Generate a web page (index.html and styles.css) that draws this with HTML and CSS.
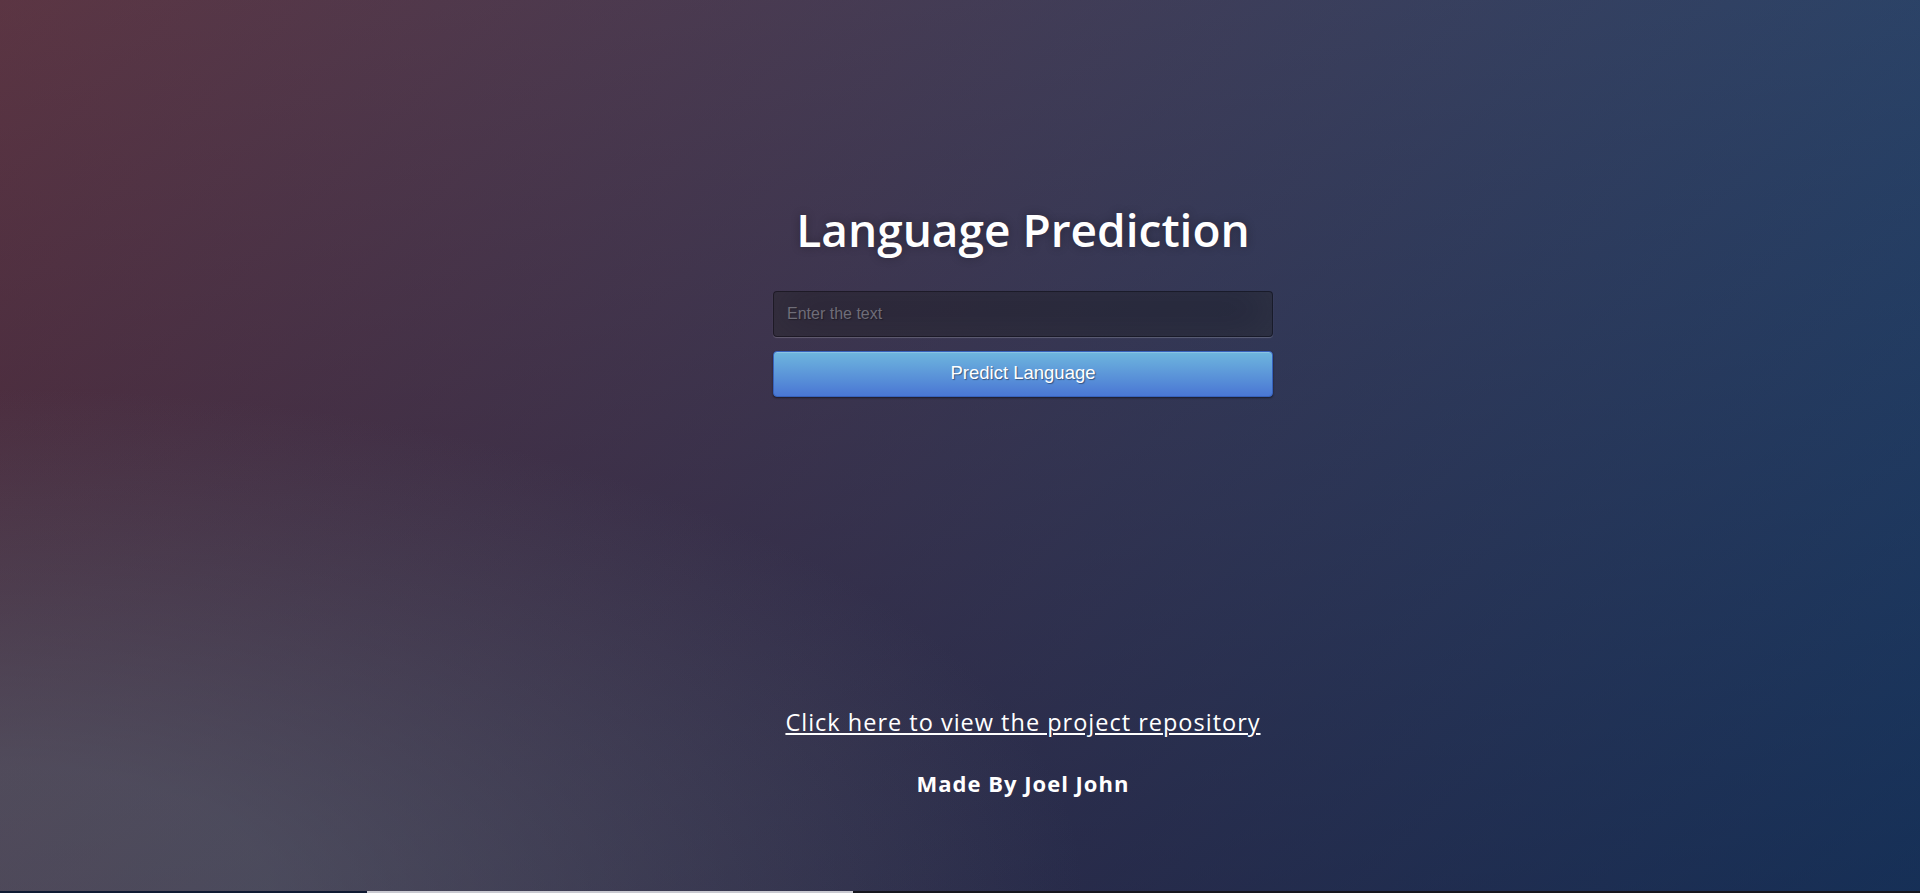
FILE: index.html
```html
<!DOCTYPE html>
<html lang="en">
<head>
<meta charset="utf-8">
<title>Language Prediction</title>
<link rel="stylesheet" href="styles.css">
</head>
<body>
<main class="page">
  <section class="predict">
    <h1 class="title">Language Prediction</h1>
    <form class="form">
      <input class="field" type="text" placeholder="Enter the text">
      <button class="btn" type="button">Predict Language</button>
    </form>
  </section>
  <footer class="footer">
    <a class="repo" href="#">Click here to view the project repository</a>
    <p class="author">Made By Joel John</p>
  </footer>
</main>
<div class="edge">
  <span class="edge-a"></span>
  <span class="edge-b"></span>
  <span class="edge-c"></span>
</div>
</body>
</html>
```

FILE: styles.css
```css
html, body {
  margin: 0;
  height: 100%;
}
body {
  font-family: "Open Sans", "Liberation Sans", sans-serif;
  background-color: #092756;
  background-image:
    radial-gradient(ellipse farthest-corner at 0% 100%, rgba(104,128,138,0.4) 10%, rgba(138,114,76,0) 40%),
    linear-gradient(to bottom, rgba(57,173,219,0.25) 0%, rgba(42,60,87,0.4) 100%),
    linear-gradient(135deg, #670d10 0%, #092756 100%);
  background-attachment: fixed;
  overflow: hidden;
}
.page {
  width: 500px;
  margin-left: calc(50% - 187px);
  padding-top: 201px;
  display: flex;
  flex-direction: column;
}
.predict {
  display: flex;
  flex-direction: column;
}
.title {
  margin: 0 0 34px;
  font-size: 46px;
  line-height: 56px;
  font-weight: 600;
  color: #fff;
  text-align: center;
  text-shadow: 0 0 10px rgba(0,0,0,0.3);
}
.form {
  display: flex;
  flex-direction: column;
  gap: 14px;
  margin: 0;
}
.field {
  box-sizing: border-box;
  width: 100%;
  height: 46px;
  margin: 0;
  padding: 0 13px;
  font-family: "Liberation Sans", Arial, sans-serif;
  font-size: 16px;
  color: #fff;
  background: rgba(0,0,0,0.3);
  border: 1px solid rgba(0,0,0,0.3);
  border-radius: 4px;
  outline: none;
  text-shadow: 1px 1px 1px rgba(0,0,0,0.3);
  box-shadow: inset 0 -5px 45px rgba(100,100,100,0.2), 0 1px 1px rgba(255,255,255,0.2);
}
.field::placeholder {
  color: #6f6d78;
}
.btn {
  box-sizing: border-box;
  width: 100%;
  height: 46px;
  margin: 0;
  padding: 0 0 2px;
  font-family: "Liberation Sans", Arial, sans-serif;
  font-size: 18.5px;
  color: #fff;
  background-color: #4a77d4;
  background-image: linear-gradient(to bottom, #6eb6de, #4a77d4);
  border: 1px solid #3762bc;
  border-radius: 4px;
  text-shadow: 1px 1px 1px rgba(0,0,0,0.4);
  box-shadow: inset 0 1px 0 rgba(255,255,255,0.2), 0 1px 2px rgba(0,0,0,0.5);
  cursor: pointer;
}
.footer {
  margin-top: 309px;
  display: flex;
  flex-direction: column;
  align-items: center;
}
.repo {
  font-size: 23.5px;
  line-height: 32px;
  letter-spacing: 1px;
  color: #fff;
  text-decoration: underline;
}
.author {
  margin: 30px 0 0;
  font-size: 22px;
  line-height: 30px;
  font-weight: 700;
  letter-spacing: 1px;
  color: #fff;
}
.edge {
  position: fixed;
  left: 0;
  right: 0;
  bottom: 0;
  height: 2px;
  display: flex;
}
.edge-a {
  width: 367px;
  background: #0f1a32;
}
.edge-b {
  width: 486px;
  background: #c9c9d1;
}
.edge-c {
  flex: 1;
  background: #16161e;
}
```
